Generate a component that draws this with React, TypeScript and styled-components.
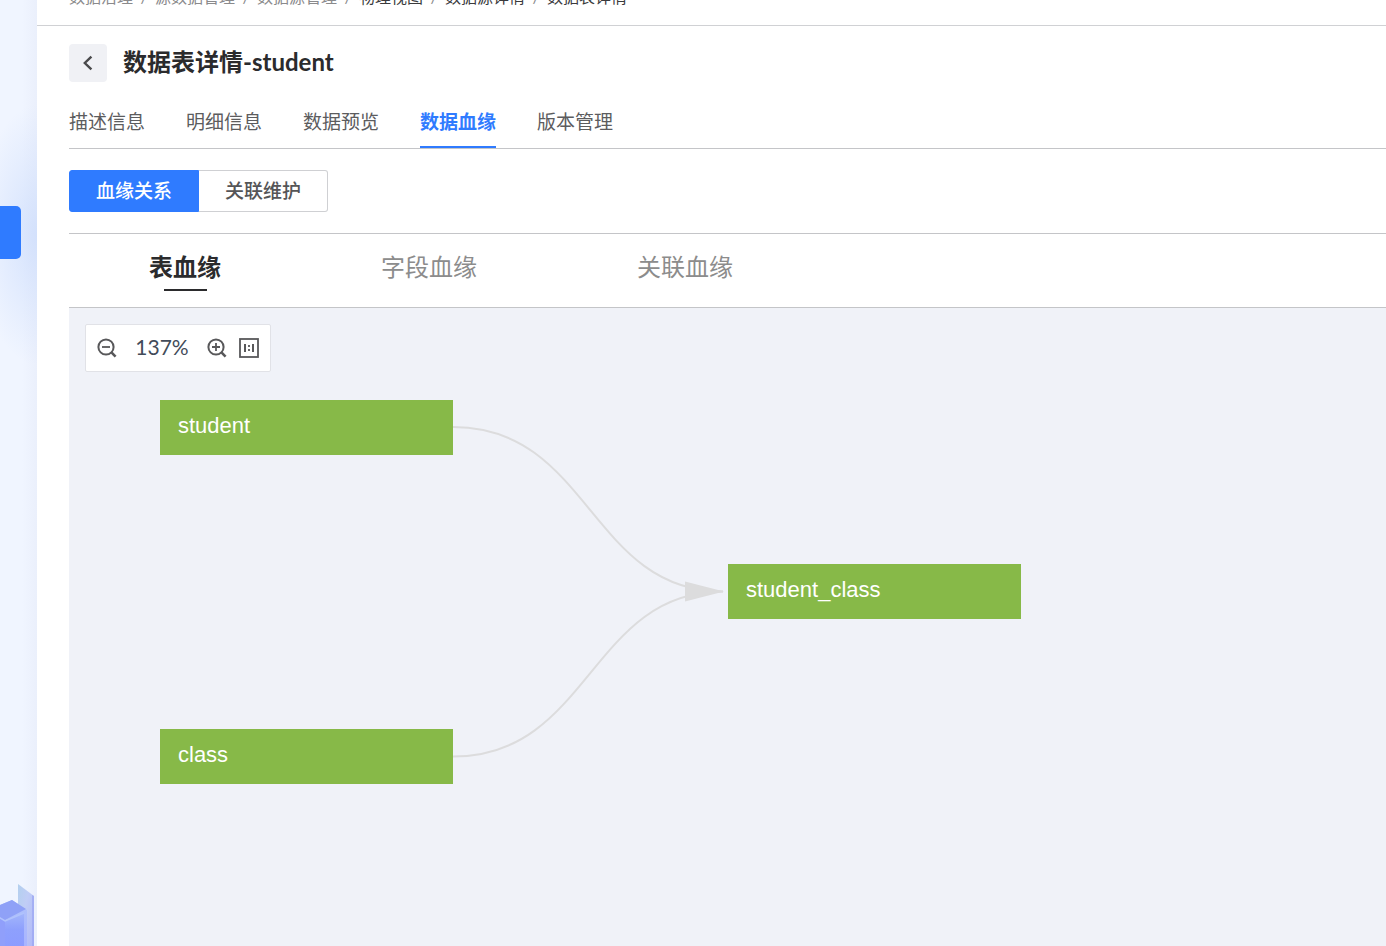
import React from "react";
import styled, { createGlobalStyle } from "styled-components";

const GlobalStyle = createGlobalStyle`
  * { box-sizing: border-box; }
  body {
    margin: 0;
    background: #fff;
    color: #2b2b2d;
    font-family: Lato, "Noto Sans CJK SC", sans-serif;
  }
  button { font: inherit; cursor: pointer; }
`;

const Page = styled.div`
  display: flex;
  min-height: 100vh;
`;

const Sidebar = styled.aside`
  display: flex;
  flex-direction: column;
  justify-content: space-between;
  flex: 0 0 37px;
  overflow: hidden;
  padding-top: 206px;
  background:
    radial-gradient(ellipse 60px 130px at 37px 235px, rgba(205, 221, 252, 0.8), rgba(205, 221, 252, 0) 100%),
    linear-gradient(90deg, rgba(232, 237, 250, 0) 60%, rgba(232, 237, 250, 0.7) 100%),
    #f0f5ff;
`;

const SidebarItem = styled.button`
  width: 21px;
  height: 53px;
  padding: 0;
  border: 0;
  border-radius: 0 5px 5px 0;
  background: #2f7bff;
`;

const Artwork = styled.svg`
  display: block;
  width: 37px;
  height: 64px;
`;

const Main = styled.main`
  display: flex;
  flex: 1;
  flex-direction: column;
  min-width: 0;
`;

const Breadcrumb = styled.nav`
  display: flex;
  align-items: flex-end;
  height: 26px;
  padding: 0 0 16px 32px;
  overflow: hidden;
  border-bottom: 1px solid #d0d1d4;
  font-size: 16px;
  line-height: 24px;
  white-space: nowrap;
`;

const Crumb = styled.a<{ $strong?: boolean }>`
  color: ${(p) => (p.$strong ? "#3a3a3c" : "#8a8a8c")};
  text-decoration: none;
`;

const Slash = styled.span`
  width: 22px;
  color: #8a8a8c;
  text-align: center;
`;

const Content = styled.div`
  display: flex;
  flex: 1;
  flex-direction: column;
  padding: 18px 0 0 32px;
`;

const TitleRow = styled.header`
  display: flex;
  align-items: center;
  gap: 16px;
`;

const BackButton = styled.button`
  display: grid;
  place-items: center;
  width: 38px;
  height: 38px;
  padding: 0;
  border: 0;
  border-radius: 4px;
  background: #f0f1f5;
`;

const Title = styled.h1`
  margin: 0;
  padding-bottom: 2px;
  font-size: 24px;
  font-weight: 700;
  line-height: 36px;
`;

const Tabs = styled.div`
  display: flex;
  gap: 41px;
  margin-top: 20px;
  border-bottom: 1px solid #c4c5c8;
`;

const Tab = styled.button<{ $active?: boolean }>`
  height: 46px;
  padding: 0 0 4px;
  border: 0;
  border-bottom: 2px solid ${(p) => (p.$active ? "#2f7bff" : "transparent")};
  background: none;
  color: ${(p) => (p.$active ? "#2f7bff" : "#5c5c5e")};
  font-size: 19px;
  font-weight: ${(p) => (p.$active ? 700 : 400)};
  line-height: 28px;
`;

const Segments = styled.div`
  display: flex;
  margin: 21px 0;
`;

const Segment = styled.button<{ $active?: boolean }>`
  width: ${(p) => (p.$active ? "130px" : "129px")};
  height: 42px;
  padding: 0;
  border: 1px solid ${(p) => (p.$active ? "#2f7bff" : "#cfd0d3")};
  border-radius: ${(p) => (p.$active ? "3px 0 0 3px" : "0 3px 3px 0")};
  border-left-width: ${(p) => (p.$active ? "1px" : "0")};
  background: ${(p) => (p.$active ? "#2f7bff" : "#fff")};
  color: ${(p) => (p.$active ? "#fff" : "#555557")};
  font-size: 19px;
  font-weight: 500;
  line-height: 28px;
`;

const LineageTabs = styled.div`
  display: flex;
  border-top: 1px solid #c4c5c8;
  border-bottom: 1px solid #c4c5c8;
`;

const LineageTab = styled.button<{ $active?: boolean }>`
  display: flex;
  flex-direction: column;
  align-items: center;
  gap: 4px;
  height: 73px;
  padding: 15px 80px 0;
  border: 0;
  background: none;
  color: ${(p) => (p.$active ? "#2b2b2d" : "#8c8c8c")};
  font-size: 24px;
  font-weight: ${(p) => (p.$active ? 700 : 400)};
  line-height: 36px;

  &::after {
    content: "";
    width: 43px;
    height: 2px;
    background: ${(p) => (p.$active ? "#2b2b2d" : "transparent")};
  }
`;

const Canvas = styled.section`
  position: relative;
  flex: 1;
  min-height: 520px;
  padding: 16px;
  overflow: hidden;
  background: #f0f2f8;
`;

const Toolbar = styled.div`
  display: inline-flex;
  align-items: center;
  gap: 10px;
  height: 48px;
  padding: 0 10px;
  border: 1px solid #e1e2e7;
  border-radius: 2px;
  background: #fff;
`;

const ToolButton = styled.button`
  display: grid;
  place-items: center;
  width: 22px;
  height: 22px;
  padding: 0;
  border: 0;
  background: none;
`;

const ZoomValue = styled.output`
  width: 68px;
  padding-bottom: 2px;
  color: #424b59;
  font-size: 21px;
  line-height: 28px;
  text-align: center;
`;

const Links = styled.svg`
  position: absolute;
  top: 0;
  left: 0;
  width: 1000px;
  height: 500px;
  pointer-events: none;
`;

const Node = styled.div<{ $x: number; $y: number }>`
  position: absolute;
  left: ${(p) => p.$x}px;
  top: ${(p) => p.$y}px;
  width: 293px;
  height: 55px;
  padding: 0 18px;
  background: #87b948;
  color: #fff;
  font-family: "Liberation Sans", Arial, sans-serif;
  font-size: 22px;
  line-height: 51px;
`;

const crumbs = [
  { label: "数据治理" },
  { label: "源数据管理" },
  { label: "数据源管理" },
  { label: "物理视图", strong: true },
  { label: "数据源详情", strong: true },
  { label: "数据表详情", strong: true },
];
const tabs = ["描述信息", "明细信息", "数据预览", "数据血缘", "版本管理"];
const lineageTabs = ["表血缘", "字段血缘", "关联血缘"];
const nodes = [
  { label: "student", x: 91, y: 92 },
  { label: "class", x: 91, y: 421 },
  { label: "student_class", x: 659, y: 256 },
];

const Magnifier = ({ plus }: { plus?: boolean }) => (
  <svg width="22" height="22" viewBox="0 0 22 22" fill="none" stroke="#58585a" strokeWidth="2">
    <circle cx="10" cy="10" r="7.6" />
    <path d="M15.4 15.4 L19.6 19.6" strokeWidth="2.6" />
    <path d={plus ? "M6 10h8M10 6v8" : "M6 10h8"} strokeWidth="1.8" />
  </svg>
);

const ActualSize = () => (
  <svg width="22" height="22" viewBox="0 0 22 22" fill="none" stroke="#58585a">
    <rect x="2" y="2" width="18" height="18" strokeWidth="1.8" />
    <path d="M7 7v8M15 7v8" strokeWidth="2" />
    <path d="M11 8v2M11 12v2" strokeWidth="1.8" />
  </svg>
);

export default function App() {
  return (
    <>
      <GlobalStyle />
      <Page>
        <Sidebar>
          <SidebarItem aria-label="数据治理" />
          <Artwork viewBox="0 0 37 64" aria-hidden="true">
            <defs>
              <linearGradient id="pane" x1="0" y1="0" x2="1" y2="1">
                <stop offset="0" stopColor="#b3d0ee" />
                <stop offset="0.4" stopColor="#c0cdf6" />
                <stop offset="1" stopColor="#b0b8f8" />
              </linearGradient>
              <linearGradient id="front" x1="0" y1="0" x2="0" y2="1">
                <stop offset="0" stopColor="#a3b6fb" />
                <stop offset="0.5" stopColor="#8ea0fd" />
                <stop offset="1" stopColor="#8c9cff" />
              </linearGradient>
              <linearGradient id="side" x1="0" y1="0" x2="0" y2="1">
                <stop offset="0" stopColor="#b0c2fa" />
                <stop offset="1" stopColor="#a8b4ff" />
              </linearGradient>
            </defs>
            <path d="M18 2 L34 14 V64 H18 Z" fill="url(#pane)" />
            <path d="M32 13 L34 14 V64 H32 Z" fill="#9ba6f2" opacity="0.7" />
            <path d="M0 23 L12 18 L27 28 V64 H0 Z" fill="url(#side)" />
            <path d="M0 23 L12 18 L26 27 L5 38 L0 35 Z" fill="#8fa1f7" />
            <path d="M0 36 L5 39 V64 H0 Z" fill="#909ffb" />
            <path d="M5 39 L24 31 V64 H5 Z" fill="url(#front)" />
            <path d="M0 36 L5 39 L24 31" fill="none" stroke="#b0c3fc" strokeWidth="1.4" />
          </Artwork>
        </Sidebar>
        <Main>
          <Breadcrumb aria-label="面包屑">
            {crumbs.map((c, i) => (
              <React.Fragment key={c.label}>
                {i > 0 && <Slash>/</Slash>}
                <Crumb href="#" $strong={c.strong}>{c.label}</Crumb>
              </React.Fragment>
            ))}
          </Breadcrumb>
          <Content>
            <TitleRow>
              <BackButton aria-label="返回">
                <svg width="16" height="18" viewBox="0 0 16 18" fill="none" stroke="#4a4a4c" strokeWidth="2.4">
                  <path d="M11.4 2.6 L4.8 9 L11.4 15.4" />
                </svg>
              </BackButton>
              <Title>数据表详情-student</Title>
            </TitleRow>
            <Tabs role="tablist">
              {tabs.map((t) => (
                <Tab key={t} role="tab" aria-selected={t === "数据血缘"} $active={t === "数据血缘"}>{t}</Tab>
              ))}
            </Tabs>
            <Segments>
              <Segment $active>血缘关系</Segment>
              <Segment>关联维护</Segment>
            </Segments>
            <LineageTabs role="tablist">
              {lineageTabs.map((t, i) => (
                <LineageTab key={t} role="tab" aria-selected={i === 0} $active={i === 0}>{t}</LineageTab>
              ))}
            </LineageTabs>
            <Canvas>
              <Toolbar>
                <ToolButton aria-label="缩小"><Magnifier /></ToolButton>
                <ZoomValue>137%</ZoomValue>
                <ToolButton aria-label="放大"><Magnifier plus /></ToolButton>
                <ToolButton aria-label="实际大小"><ActualSize /></ToolButton>
              </Toolbar>
              <Links viewBox="0 0 1000 500" fill="none" stroke="#dcdcdd" strokeWidth="2" aria-hidden="true">
                <path d="M384 119 C521 119 521 283.5 654 283.5" />
                <path d="M384 448.5 C521 448.5 521 283.5 654 283.5" />
                <path d="M616 273.5 L655 283.5 L616 293.5 Z" fill="#dcdcdd" stroke="none" />
              </Links>
              {nodes.map((n) => (
                <Node key={n.label} $x={n.x} $y={n.y}>{n.label}</Node>
              ))}
            </Canvas>
          </Content>
        </Main>
      </Page>
    </>
  );
}
